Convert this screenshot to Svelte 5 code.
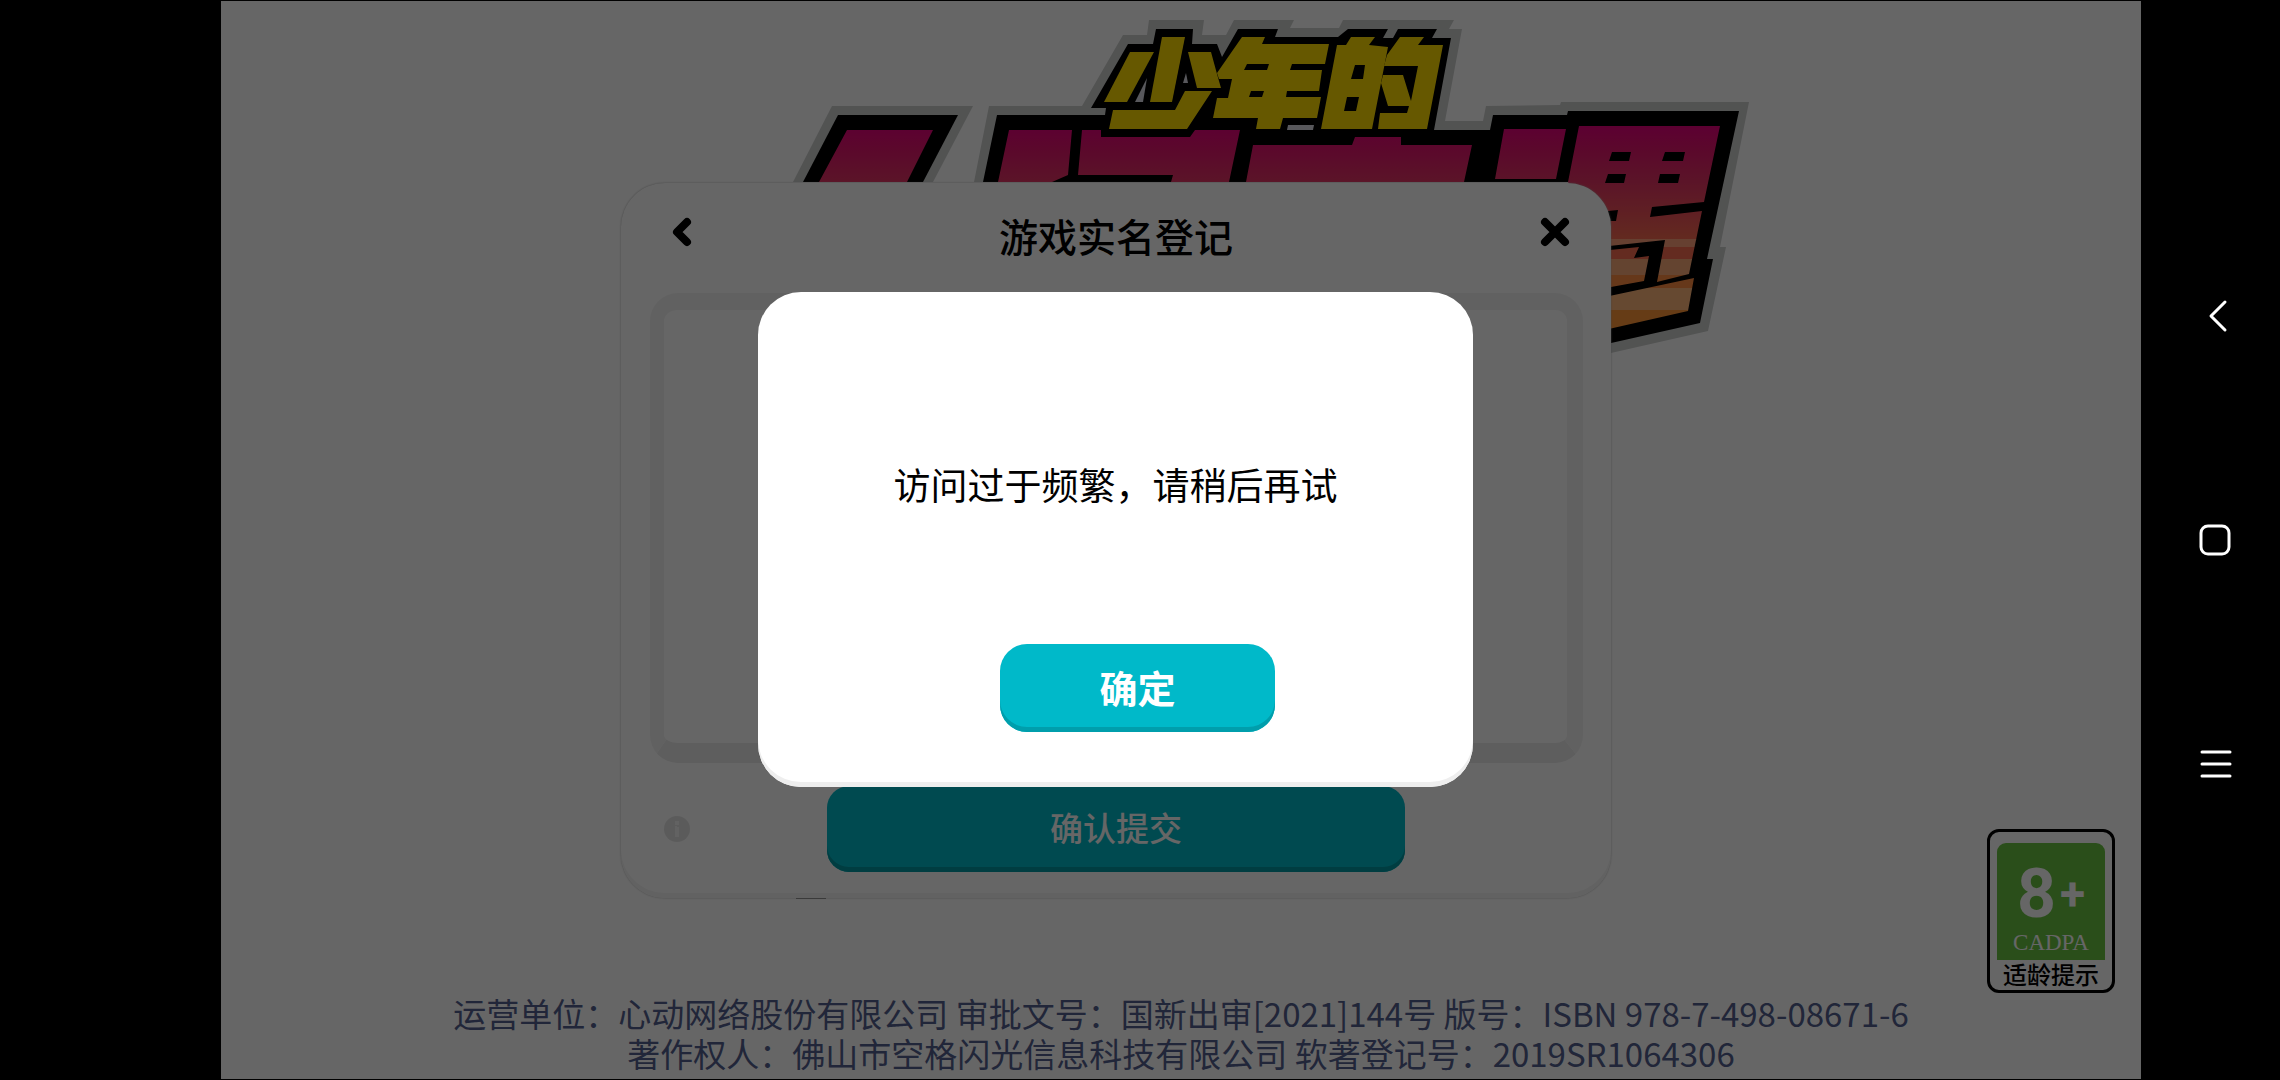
<script>
	const notices = [
		'运营单位：心动网络股份有限公司 审批文号：国新出审[2021]144号 版号：ISBN 978-7-498-08671-6',
		'著作权人：佛山市空格闪光信息科技有限公司 软著登记号：2019SR1064306'
	];

	// Title art shapes, in screen units
	const edge = [
		'793,182 832,106 973,106 933,182',
		'974,182 989,106 1082,106 1123,35 1147,35 1149,20 1204,20 1202,35 1226,35 1234,20 1294,20 1290,28 1339,28 1343,20 1454,20 1449,29 1462,29 1445,121 1483,121 1486,106 1560,105 1561,102 1749,102 1720,247 1726,247 1708,331 1580,360 1580,182'
	];
	const ink = [
		'803,182 838,115 958,115 923,182',
		'983,182 997,115 1105,115 1106,108 1091,108 1128,44 1153,44 1156,29 1193,29 1192,44 1217,44 1222,57 1238,29 1278,29 1275,37 1338,37 1348,29 1388,29 1383,38 1393,38 1398,29 1437,29 1432,38 1451,38 1434,130 1490,130 1493,115 1567,115 1568,111 1739,111 1707,259 1713,259 1700,323 1580,350 1580,182'
	];
	const gaps = [
		'1147,78 1135,102 1143,102',
		'1186,73 1183,83 1188,83',
		'1288,125 1314,125 1313,130 1287,130'
	];
	const yellow = [
		'M1130,52 1154,52 1127,102 1104,102Z',
		'M1162,37 1185,37 1172,102 1150,102Z',
		'M1188,52 1211,52 1217,74 1221,88 1197,88Z',
		'M1113,110 1175,110 1185,91 1212,91 1187,129 1109,129Z',
		'M1242,37 1265,37 1262,44 1329,44 1325,64 1292,64 1290,70 1322,70 1319,91 1287,91 1286,97 1321,97 1317,118 1283,118 1280,129 1256,129 1258,118 1213,118 1217,98 1228,98 1232,79 1219,79 1217,73ZM1247,64 1244,70 1267,70 1269,64ZM1251,91 1249,97 1262,97 1264,91Z',
		'M1351,37 1375,37 1369,45 1388,47 1372,129 1321,129 1337,45 1346,45ZM1355,65 1351,79 1363,79 1365,65ZM1347,97 1344,111 1356,111 1359,97Z',
		'M1400,37 1424,37 1418,45 1443,45 1427,129 1378,129 1380,113 1407,113 1409,106 1388,106 1381,83 1383,75 1403,75 1411,101 1418,66 1384,66 1387,55Z'
	];
	const pink = [
		'M819,182 847,130 933,130 907,182Z',
		'M1009,130 1072,130 1068,175 1052,182 998,182Z',
		'M1082,130 1101,130 1101,137 1190,137 1195,130 1240,130 1229,182 1171,182 1173,175 1078,175Z',
		'M1253,145 1352,145 1355,137 1401,137 1401,145 1472,145 1464,182 1246,182Z',
		'M1504,129 1566,129 1556,179 1495,179Z',
		'M1579,126 1720,126 1704,202 1652,207 1650,217 1702,211 1689,274 1657,282 1665,240 1600,247 1568,182ZM1612,152 1609,161 1629,161 1631,152ZM1665,152 1662,161 1683,161 1685,152ZM1608,174 1605,183 1624,183 1626,174ZM1660,174 1658,183 1678,183 1680,174ZM1608,211 1606,221 1616,221 1618,210Z',
		'M1600,251 1639,247 1634,258 1649,256 1644,281 1600,289Z',
		'M1600,298 1694,278 1688,311 1600,331Z'
	];
</script>

<main class="screen">
	<div class="stage">
		<svg class="art" viewBox="221 1 1920 1078" preserveAspectRatio="xMidYMin meet" aria-hidden="true">
			<defs>
				<linearGradient id="sunset" gradientUnits="userSpaceOnUse" x1="0" y1="125" x2="0" y2="240">
					<stop offset="0" stop-color="#e6007e" />
					<stop offset="0.2" stop-color="#e4146e" />
					<stop offset="0.5" stop-color="#e43464" />
					<stop offset="1" stop-color="#f86a50" />
				</linearGradient>
				<clipPath id="letters">
					{#each pink as d}
						<path {d} clip-rule="evenodd" />
					{/each}
				</clipPath>
			</defs>
			{#each edge as points}
				<polygon {points} fill="#cdcfce" />
			{/each}
			{#each ink as points}
				<polygon {points} fill="#000" />
			{/each}
			{#each gaps as points}
				<polygon {points} fill="#dcdde6" />
			{/each}
			{#each yellow as d}
				<path {d} fill="#ffdc00" fill-rule="evenodd" />
			{/each}
			<g clip-path="url(#letters)">
				<rect x="800" y="120" width="940" height="120" fill="url(#sunset)" />
				<rect x="1580" y="239" width="160" height="8" fill="#ffa07c" />
				<rect x="1580" y="247" width="160" height="12" fill="#fa6c50" />
				<rect x="1580" y="259" width="160" height="16" fill="#fbab78" />
				<rect x="1580" y="275" width="160" height="13" fill="#ff8c42" />
				<rect x="1580" y="288" width="160" height="22" fill="#ffb67c" />
				<rect x="1580" y="310" width="160" height="24" fill="#ff9638" />
			</g>
			<rect x="796" y="897" width="30" height="2" fill="#888" />
		</svg>

		<div class="notices">
			<div class="rating">
				<div class="rating-box">
					<span class="age">8<span class="plus">+</span></span>
					<span class="cadpa">CADPA</span>
				</div>
				<span class="hint">适龄提示</span>
			</div>
			<footer>
				{#each notices as line}
					<p>{line}</p>
				{/each}
			</footer>
		</div>

		<div class="layer">
			<section class="panel">
				<header>
					<button class="icon" aria-label="返回">
						<svg width="20" height="30" viewBox="0 0 20 30">
							<path d="M15 5 5 15 15 25" />
						</svg>
					</button>
					<h1>游戏实名登记</h1>
					<button class="icon" aria-label="关闭">
						<svg width="30" height="30" viewBox="0 0 30 30">
							<path d="M5 5 25 25M25 5 5 25" />
						</svg>
					</button>
				</header>
				<div class="form"></div>
				<div class="actions">
					<svg class="info" width="28" height="28" viewBox="0 0 28 28">
						<circle cx="14" cy="14" r="13" fill="#e4e4e4" />
						<path d="M14 6v4M14 12v10M12 13h2" fill="none" stroke="#f6f6f6" stroke-width="4" />
					</svg>
					<button class="submit">确认提交</button>
				</div>
			</section>
		</div>

		<div class="layer shade">
			<div class="modal" role="alertdialog" aria-modal="true" aria-labelledby="message">
				<p id="message">访问过于频繁，请稍后再试</p>
				<button class="ok">确定</button>
			</div>
		</div>
	</div>

	<nav>
		<button aria-label="返回上一页">
			<svg width="36" height="36" viewBox="0 0 36 36"><path d="M28 4 14 18 28 32" /></svg>
		</button>
		<button aria-label="主屏幕">
			<svg width="36" height="36" viewBox="0 0 36 36"><rect x="4" y="4" width="28" height="28" rx="7" /></svg>
		</button>
		<button aria-label="菜单">
			<svg width="36" height="36" viewBox="0 0 36 36"><path d="M5 6H33M5 18H33M5 30H33" /></svg>
		</button>
	</nav>
</main>

<style>
	:global(body) {
		margin: 0;
		background: #000;
	}

	.screen {
		display: grid;
		grid-template-columns: 221px 1fr 139px;
		min-height: 100vh;
		padding: 1px 0;
		box-sizing: border-box;
		background: #000;
		font-family: "Noto Sans CJK SC", "Noto Sans", sans-serif;
	}

	button {
		border: 0;
		padding: 0;
		background: none;
		font-family: inherit;
		cursor: pointer;
	}

	h1, p { margin: 0; }
	svg { display: block; }

	/* every layer of the stage shares one grid cell */
	.stage {
		grid-column: 2;
		display: grid;
		background: #fff;
	}

	.stage > * { grid-area: 1 / 1; }

	.art { width: 100%; }

	.notices {
		display: flex;
		flex-direction: column;
		justify-content: flex-end;
		padding-bottom: 6px;
	}

	.rating {
		align-self: flex-end;
		display: flex;
		flex-direction: column;
		align-items: center;
		width: 128px;
		margin-right: 26px;
		padding: 11px 7px 2px;
		box-sizing: border-box;
		border: 3px solid #000;
		border-radius: 12px;
	}

	.rating-box {
		display: flex;
		flex-direction: column;
		align-items: center;
		width: 108px;
		height: 117px;
		padding-top: 16px;
		box-sizing: border-box;
		border-radius: 9px 9px 0 0;
		background: #69c341;
		color: #fff;
	}

	.age {
		display: flex;
		align-items: center;
		gap: 4px;
		font: 700 68px/70px Roboto, sans-serif;
	}

	.plus { font-size: 46px; }

	.cadpa { font: 23px/28px "Liberation Serif", serif; }

	.hint {
		font-size: 24px;
		font-weight: 500;
		line-height: 28px;
	}

	footer {
		color: #53608f;
		font-size: 33px;
		line-height: 40px;
		text-align: center;
	}

	.layer {
		display: flex;
		align-items: center;
		justify-content: center;
		padding-right: 131px;
	}

	.shade {
		padding-bottom: 1px;
		background: rgba(0, 0, 0, 0.6);
	}

	.panel {
		display: flex;
		flex-direction: column;
		width: 990px;
		height: 715px;
		padding: 0 28px 26px 29px;
		box-sizing: border-box;
		border-radius: 44px;
		background: #fff;
		box-shadow: inset 0 -5px #f6f6f6, 0 0 2px #aaa;
	}

	header {
		display: flex;
		align-items: center;
		justify-content: space-between;
		height: 110px;
		padding: 0 12px 2px 22px;
		box-sizing: border-box;
	}

	.icon path {
		fill: none;
		stroke: #000;
		stroke-width: 8;
		stroke-linecap: round;
		stroke-linejoin: round;
	}

	.icon svg { margin-bottom: 10px; }

	h1 {
		padding-bottom: 4px;
		font-size: 39px;
		font-weight: 500;
	}

	.form {
		height: 470px;
		box-sizing: border-box;
		border: solid #f3f3f3;
		border-width: 17px 16px 20px 14px;
		border-bottom-color: #eaeaea;
		border-radius: 28px;
	}

	.actions {
		display: grid;
		grid-template-columns: 1fr 578px 1fr;
		align-items: center;
		margin-top: auto;
	}

	.info { margin-left: 13px; }

	.submit, .ok {
		padding-bottom: 4px;
		background: #00b9c9;
		color: #fff;
	}

	.submit {
		height: 86px;
		border-radius: 22px;
		box-shadow: inset 0 -5px #009aa4;
		font-size: 33px;
		font-weight: 500;
	}

	.modal {
		display: flex;
		flex-direction: column;
		align-items: center;
		justify-content: space-between;
		width: 715px;
		height: 495px;
		padding: 166px 0 55px;
		box-sizing: border-box;
		border-radius: 43px;
		background: #fff;
		box-shadow: inset 0 -5px #eee;
	}

	.modal p {
		font-size: 37px;
		line-height: 52px;
	}

	.ok {
		width: 275px;
		height: 88px;
		margin-left: 44px;
		border-radius: 27px;
		box-shadow: inset 0 -5px #009eac;
		font-size: 38px;
		font-weight: 700;
	}

	nav {
		display: flex;
		flex-direction: column;
		justify-content: center;
	}

	nav button {
		display: flex;
		align-items: center;
		justify-content: center;
		height: 224px;
		padding-left: 9px;
	}

	nav path, nav rect {
		fill: none;
		stroke: #fff;
		stroke-width: 3;
		stroke-linecap: round;
		stroke-linejoin: round;
	}
</style>
